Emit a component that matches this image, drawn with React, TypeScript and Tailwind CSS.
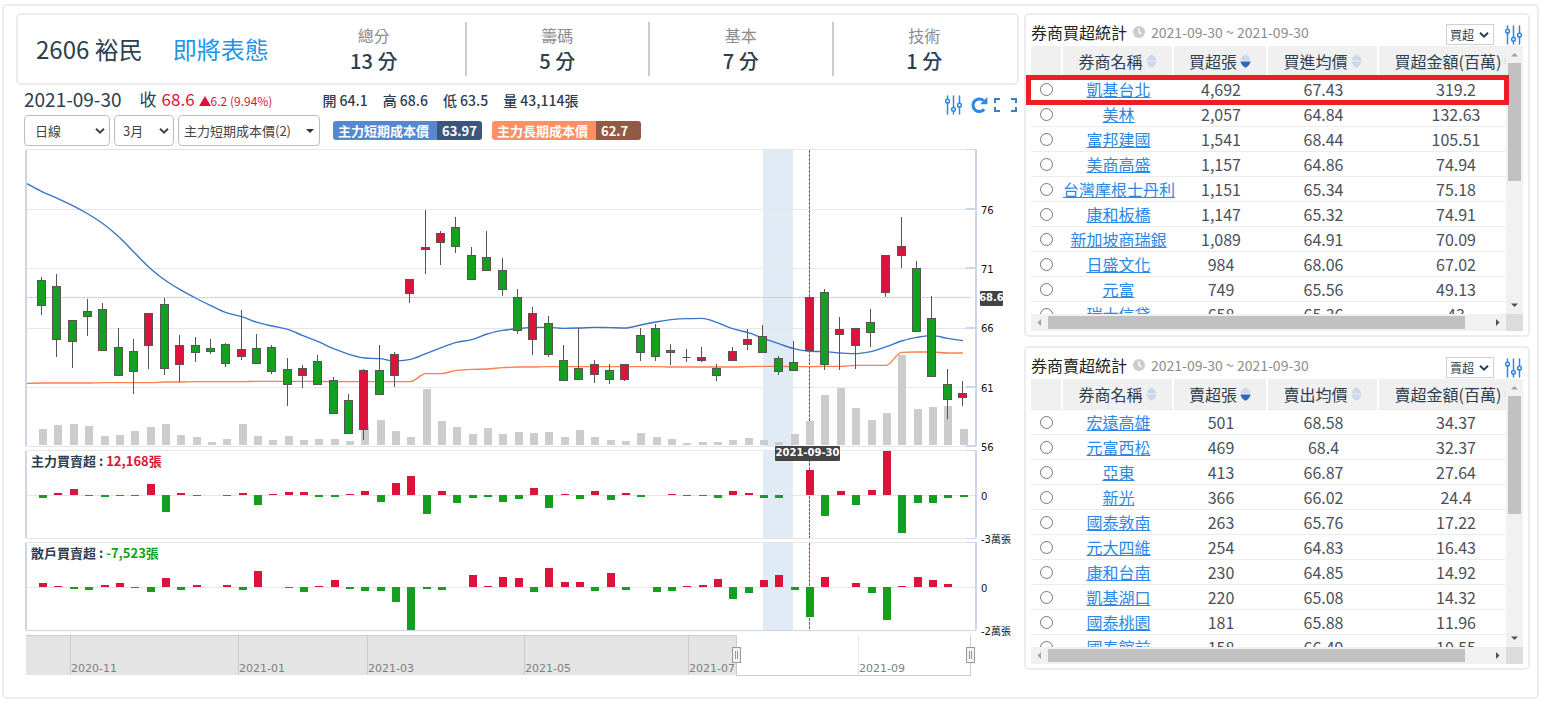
import React from "react";

type Candle = [high: number, top: number, bottom: number, low: number, up: 0 | 1];

/* Values below are in thirds of a pixel, measured from y = 145. */
const CANDLES: Candle[] = [
  [396, 406, 482, 510, 0], [387, 424, 584, 636, 0], [526, 526, 590, 669, 0], [462, 499, 515, 573, 0],
  [474, 493, 617, 617, 0], [549, 607, 692, 692, 0], [582, 619, 680, 747, 0], [505, 505, 602, 672, 1],
  [459, 478, 671, 690, 0], [570, 601, 659, 711, 1], [576, 601, 623, 651, 0], [582, 610, 620, 627, 0],
  [594, 598, 654, 666, 0], [495, 613, 635, 645, 1], [567, 610, 656, 656, 0], [600, 607, 680, 687, 0],
  [639, 674, 719, 783, 0], [660, 670, 692, 729, 1], [630, 649, 719, 719, 0], [696, 706, 806, 806, 0],
  [747, 766, 866, 866, 0], [672, 676, 854, 885, 1], [600, 676, 749, 749, 0], [621, 628, 692, 726, 1],
  [403, 403, 446, 474, 1], [195, 307, 314, 387, 1], [258, 265, 293, 360, 1], [216, 247, 305, 324, 0],
  [306, 331, 402, 402, 0], [258, 337, 377, 377, 0], [339, 376, 434, 453, 0], [432, 457, 557, 567, 0],
  [486, 505, 584, 630, 1], [513, 535, 629, 636, 0], [600, 646, 707, 707, 0], [550, 670, 704, 704, 0],
  [645, 658, 689, 714, 1], [657, 676, 704, 717, 0], [658, 658, 704, 708, 1], [549, 571, 623, 648, 0],
  [537, 550, 635, 648, 0], [597, 616, 623, 660, 0], [612, 637, 637, 651, 0], [606, 637, 647, 651, 1],
  [657, 670, 692, 708, 0], [606, 619, 647, 647, 1], [552, 583, 599, 615, 1], [540, 574, 623, 623, 0],
  [633, 640, 680, 690, 0], [588, 652, 677, 677, 0], [457, 457, 617, 617, 1], [432, 442, 659, 675, 0],
  [516, 553, 569, 675, 1], [550, 550, 602, 672, 1], [492, 532, 563, 606, 0], [331, 331, 443, 456, 1],
  [216, 304, 332, 369, 1], [348, 370, 560, 560, 0], [453, 520, 695, 695, 0], [672, 718, 764, 822, 0],
  [708, 745, 758, 783, 1],
];

const VOLUME = [
  48, 60, 63, 57, 27, 30, 42, 54, 63, 30, 24, 9, 18, 63, 27, 15, 27, 15, 18, 18, 12, 60, 75, 42, 24, 168, 72, 54, 33,
  51, 33, 39, 36, 39, 24, 45, 24, 15, 12, 36, 24, 18, 6, 9, 9, 15, 21, 15, 9, 33, 72, 150, 171, 111, 75, 96, 270, 108,
  114, 117, 48,
];

const MAIN_FORCE = [
  -9, 6, 18, -3, -6, -3, -3, 33, -51, 6, -3, 0, -3, 6, -30, 3, 9, 9, -6, -6, 3, 12, -21, 36, 57, -57, 12, -24, -9, -6,
  -21, -12, 21, -39, 3, -12, 12, -15, 6, -6, 0, 3, -3, -3, -9, 12, 6, -9, -9, 0, 75, -63, 12, -30, 15, 132, -114, -24,
  -24, -9, -6,
];

const RETAIL = [
  12, 3, -6, -9, 6, 12, -3, -15, 27, -9, 6, 0, 6, -9, 48, 0, -3, -15, 3, 21, -6, -12, -12, -45, -129, -6, -9, 0, 36, 3,
  30, 27, -15, 57, 15, 15, -12, 42, -9, 0, -15, -12, 3, 6, 24, -36, -18, 21, 36, -9, -90, 30, 0, 12, -18, -99, 3, 30,
  21, 9, 0,
];

const SHORT_COST = [
  140, 160, 182, 207, 237, 275, 322, 368, 405, 434, 459, 482, 503, 515, 532, 543, 553, 572, 590, 611, 628, 639, 641,
  648, 643, 626, 608, 592, 584, 567, 556, 551, 547, 547, 550, 549, 547, 548, 549, 540, 531, 524, 521, 520, 533, 551,
  563, 580, 596, 611, 619, 620, 624, 626, 620, 605, 588, 577, 572, 580, 587,
];

const LONG_COST = [
  714, 714, 714, 714, 713, 713, 713, 713, 711, 711, 710, 710, 710, 710, 709, 709, 709, 709, 709, 710, 710, 710, 710,
  710, 710, 686, 686, 676, 673, 672, 668, 666, 666, 665, 665, 665, 665, 665, 665, 665, 665, 666, 666, 666, 666, 666,
  665, 664, 664, 665, 665, 664, 664, 661, 661, 661, 622, 621, 621, 624, 624,
];

const RED = "#dc143c";
const GREEN = "#14a01e";
const AXIS = "#ccd6eb";
const GRID = "#e6e6e6";
const CROSSHAIR = "#1c7a99";

const py = (v: number) => 145 + v / 3;
const cx = (i: number) => Math.round(41.5 + i * 15.35 - 0.5) + 0.5;
const bx = (i: number) => Math.round(39.15 + i * 15.34);

/* Monotone cubic curve, so flat stretches stay flat beside steep ones. */
function curve(pts: [number, number][]) {
  const n = pts.length;
  const slope: number[] = [];
  for (let i = 0; i < n - 1; i++) slope.push((pts[i + 1][1] - pts[i][1]) / (pts[i + 1][0] - pts[i][0]));
  const tan = pts.map((_, i) => {
    if (i === 0) return slope[0];
    if (i === n - 1) return slope[n - 2];
    const a = slope[i - 1];
    const b = slope[i];
    return a * b <= 0 ? 0 : (2 * a * b) / (a + b);
  });
  let d = `M${pts[0][0]} ${pts[0][1].toFixed(2)}`;
  for (let i = 0; i < n - 1; i++) {
    const h = (pts[i + 1][0] - pts[i][0]) / 3;
    d += `C${(pts[i][0] + h).toFixed(2)} ${(pts[i][1] + tan[i] * h).toFixed(2)} ${(pts[i + 1][0] - h).toFixed(2)} ${(
      pts[i + 1][1] - tan[i + 1] * h
    ).toFixed(2)} ${pts[i + 1][0].toFixed(2)} ${pts[i + 1][1].toFixed(2)}`;
  }
  return d;
}

const linePath = (start: number, values: number[]) =>
  curve([[27, py(start)], ...values.map((v, i): [number, number] => [42 + i * 15.35, py(v)])]);

function Bars({ values, base }: { values: number[]; base: number }) {
  return (
    <g shapeRendering="crispEdges">
      {values.map((v, i) => {
        const h = Math.round(Math.abs(v) / 3);
        return h === 0 ? null : (
          <rect key={i} x={bx(i)} width={8} y={v > 0 ? base - h : base} height={h} fill={v > 0 ? RED : GREEN} />
        );
      })}
    </g>
  );
}

const MONTHS: [number, string][] = [
  [70, "2020-11"],
  [238, "2021-01"],
  [367, "2021-03"],
  [524, "2021-05"],
  [688, "2021-07"],
  [858, "2021-09"],
];

function Handle({ x }: { x: number }) {
  return (
    <g>
      <rect x={x - 4} y={647.5} width={8} height={15} fill="#f2f2f2" stroke="#999999" />
      <path d={`M${x - 1} 651v8M${x + 1} 651v8`} stroke="#999999" />
    </g>
  );
}

function Chart() {
  const panels = [
    [149, 446],
    [450, 538],
    [542, 630],
  ];
  return (
    <svg viewBox="16 148 1003 532" className="mt-0.5 block h-auto w-full" role="img" aria-label="2606 裕民 日線">
      <g shapeRendering="crispEdges">
        {panels.map(([t, b]) => (
          <rect key={t} x={763} y={t} width={30} height={b - t} fill="#e0ebf5" />
        ))}
        {[149, 209, 268, 328, 387, 446, 450, 495, 538, 542, 587].map((y) => (
          <rect key={y} x={26} y={y} width={950} height={1} fill={GRID} />
        ))}
        <rect x={26} y={630} width={950} height={1} fill={AXIS} />
        {VOLUME.map((v, i) => (
          <rect key={i} x={bx(i)} width={8} y={445 - Math.round(v / 3)} height={Math.round(v / 3)} fill="#cccccc" />
        ))}
        <path d="M26 297.5H971" stroke="#c8c8c8" strokeDasharray="3 1" />
      </g>
      <path d="M809.5 150V421" stroke={CROSSHAIR} strokeDasharray="3 1" />
      <path d={linePath(116, SHORT_COST)} fill="none" stroke="#3a74c8" strokeWidth={1.4} />
      <path d={linePath(715, LONG_COST)} fill="none" stroke="#fc7f4e" strokeWidth={1.4} />
      {CANDLES.map(([h, t, b, l, up], i) => {
        const x = cx(i);
        const top = Math.round(py(t) - 0.5) + 0.5;
        const bottom = Math.round(py(b) - 0.5) + 0.5;
        return (
          <g key={i} stroke="#555555">
            <path d={`M${x} ${Math.round(py(h))}V${Math.round(py(l))}`} />
            {bottom > top ? (
              <rect x={x - 4} y={top} width={8} height={bottom - top} fill={up ? RED : GREEN} />
            ) : (
              <path d={`M${x - 4} ${top}h8`} />
            )}
          </g>
        );
      })}
      <Bars values={MAIN_FORCE} base={495} />
      <Bars values={RETAIL} base={587} />
      <path d="M809.5 451V470M809.5 496V538M809.5 543V587M809.5 618V630" stroke={CROSSHAIR} strokeDasharray="3 1" />

      <g shapeRendering="crispEdges" fill={AXIS}>
        {panels.map(([t, b]) => (
          <g key={t}>
            <rect x={25} y={t + 1} width={2} height={b - t - 1} />
            <rect x={975} y={t} width={2} height={b - t} />
            <rect x={966} y={t} width={10} height={1} />
          </g>
        ))}
        {[208, 267, 327, 386, 445].map((y) => (
          <rect key={y} x={966} y={y} width={10} height={2} />
        ))}
        <rect x={966} y={538} width={10} height={1} />
      </g>

      <g className="font-['DejaVu_Sans','Noto_Sans_CJK_TC',sans-serif] text-[10px]" fill="#111111">
        <text x={981} y={214}>76</text>
        <text x={981} y={273}>71</text>
        <text x={981} y={332}>66</text>
        <text x={981} y={392}>61</text>
        <text x={981} y={451}>56</text>
        <text x={981} y={500}>0</text>
        <text x={981} y={543}>-3萬張</text>
        <text x={981} y={592}>0</text>
        <text x={981} y={635}>-2萬張</text>
      </g>
      <g className="font-['DejaVu_Sans',sans-serif] text-[10px] font-bold">
        <rect x={980} y={291} width={23} height={15} rx={1} fill="#444444" />
        <text x={991.5} y={301} textAnchor="middle" fill="#ffffff">68.6</text>
        <rect x={775} y={446} width={65} height={15} rx={1} fill="#444444" />
        <text x={807.5} y={456} textAnchor="middle" fill="#ffffff">2021-09-30</text>
      </g>

      <g className="font-['Noto_Sans_CJK_TC',sans-serif] text-[13px] font-bold" fill="#2c3e50">
        <text x={31} y={466}>
          主力買賣超 : <tspan fill={RED}>12,168張</tspan>
        </text>
        <text x={31} y={558}>
          散戶買賣超 : <tspan fill={GREEN}>-7,523張</tspan>
        </text>
      </g>

      <rect x={26} y={635} width={710} height={40} fill="#e4e4e4" />
      <g className="font-['DejaVu_Sans',sans-serif] text-[11px]">
        {MONTHS.map(([x, label]) => (
          <g key={label}>
            <path d={`M${x + 0.5} 636V675`} stroke={x > 736 ? "#e6e6e6" : "#cccccc"} />
            <text x={x + 1} y={672} fill="#808080">{label}</text>
          </g>
        ))}
      </g>
      <path d="M26 635.5H736.5V675.5H970.5V635" fill="none" stroke="#cccccc" />
      <Handle x={736.5} />
      <Handle x={970.5} />
    </svg>
  );
}

function Sliders() {
  return (
    <svg viewBox="0 0 17 20" width="17" height="20" fill="none" stroke="#2b88e6" strokeWidth="1.5" strokeLinecap="round">
      <path d="M2.5 1v3.2M2.5 8.2V19M8.5 1v11.2M8.5 16.4V19M14.5 1v7.2M14.5 12.2V19" />
      <circle cx="2.5" cy="6.2" r="1.9" />
      <circle cx="8.5" cy="14.3" r="1.9" />
      <circle cx="14.5" cy="10.2" r="1.9" />
    </svg>
  );
}

function Chevron() {
  return (
    <svg
      viewBox="0 0 10 7"
      width="10"
      height="7"
      fill="none"
      stroke="currentColor"
      strokeWidth="2"
      className="pointer-events-none absolute top-1/2 right-1 -translate-y-1/2"
    >
      <path d="M1 1.2l4 4 4-4" />
    </svg>
  );
}

function Select({ label, options, className }: { label: string; options: string[]; className: string }) {
  return (
    <span className={`relative inline-flex ${className}`}>
      <select aria-label={label} className="w-full appearance-none bg-transparent outline-none">
        {options.map((o) => (
          <option key={o}>{o}</option>
        ))}
      </select>
      <Chevron />
    </span>
  );
}

function Score({ name, value, last }: { name: string; value: string; last?: boolean }) {
  return (
    <div
      className={`flex h-[54px] flex-1 flex-col items-center justify-center border-r-2 ${
        last ? "border-transparent" : "border-[#cccccc]"
      }`}
    >
      <span className="text-base leading-6 text-[#8c8c8c]">{name}</span>
      <span className="text-xl leading-7 font-medium">{value}</span>
    </div>
  );
}

function CostBadge({ name, value, left, right }: { name: string; value: string; left: string; right: string }) {
  return (
    <span className="flex h-[19px] overflow-hidden rounded-[3px] text-[13px] leading-[19px] font-bold text-white">
      <span className={`w-[104px] pl-[5px] ${left}`}>{name}</span>
      <span className={`w-[45px] pl-[5px] ${right}`}>{value}</span>
    </span>
  );
}

function StockPanel() {
  return (
    <section className="min-w-0 flex-1">
      <header className="flex h-[72px] items-center rounded-[5px] border-2 border-[#ececec]">
        <h1 className="flex w-[265px] shrink-0 gap-[30px] pl-[18px] text-2xl leading-8">
          <span>2606 裕民</span>
          <span className="text-[#2196e8]">即將表態</span>
        </h1>
        <Score name="總分" value="13 分" />
        <Score name="籌碼" value="5 分" />
        <Score name="基本" value="7 分" />
        <Score name="技術" value="1 分" last />
      </header>

      <div className="flex h-[30px] items-center pl-2">
        <span className="pb-0.5 text-[19px]">2021-09-30</span>
        <span className="ml-[18px] flex items-baseline pb-0.5 text-[17px]">
          <span className="mr-[5px]">收</span>
          <span className="text-[#dc143c]">68.6</span>
          <svg viewBox="0 0 12 10" width="12" height="10" className="ml-1" aria-hidden>
            <path d="M6 0L12 10H0z" fill={RED} />
          </svg>
          <span className="text-xs text-[#dc143c]">6.2 (9.94%)</span>
        </span>
        <span className="ml-[50px] flex gap-[15px] text-sm font-medium">
          <span>開 64.1</span>
          <span>高 68.6</span>
          <span>低 63.5</span>
          <span>量 43,114張</span>
        </span>
        <span className="ml-auto flex items-center pt-[9px] pr-px">
          <button type="button" aria-label="設定">
            <Sliders />
          </button>
          <button type="button" aria-label="重新整理" className="ml-2">
            <svg viewBox="0 0 18 18" width="18" height="18">
              <path d="M14.2 13.2A6.3 6.3 0 1 1 13.6 4.6" fill="none" stroke="#2b88e6" strokeWidth="3" />
              <path d="M17.4 1v7.2H10z" fill="#2b88e6" />
            </svg>
          </button>
          <button type="button" aria-label="全螢幕" className="ml-1.5">
            <svg viewBox="0 0 24 16" width="24" height="16" fill="none" stroke="#3d7fc4" strokeWidth="2">
              <path d="M6 2H1v4M1 10v4h5M17 2h5v4M22 10v4h-5" />
            </svg>
          </button>
        </span>
      </div>

      <div className="flex h-[31px] pl-2 text-[13px] text-[#444444]">
        <Select
          label="週期"
          options={["日線", "週線"]}
          className="w-[86px] rounded-[4px] border border-[#bdbdbd] pl-2.5"
        />
        <Select
          label="區間"
          options={["3月", "6月"]}
          className="ml-1 w-[60px] rounded-[4px] border border-[#bdbdbd] pl-2"
        />
        <button
          type="button"
          className="ml-1 flex w-[142px] items-center justify-between rounded-[4px] border border-[#bdbdbd] px-[5px]"
        >
          主力短期成本價(2)
          <svg viewBox="0 0 8 4" width="8" height="4" aria-hidden>
            <path d="M0 0h8L4 4z" fill="#333333" />
          </svg>
        </button>
        <span className="ml-[13px] flex items-center gap-2.5">
          <CostBadge name="主力短期成本價" value="63.97" left="bg-[#5687d1]" right="bg-[#3e567b]" />
          <CostBadge name="主力長期成本價" value="62.7" left="bg-[#fe9065]" right="bg-[#905a44]" />
        </span>
      </div>

      <Chart />
    </section>
  );
}

function SortMark({ active }: { active?: boolean }) {
  return (
    <svg viewBox="0 0 11 14" width="11" height="14" className="ml-[3px] shrink-0" aria-hidden>
      <path d="M5.5 0.3C8 1.6 10 3.8 10.6 6.6H0.4C1 3.8 3 1.6 5.5 0.3z" fill="#ccd8ea" />
      <path d="M5.5 13.7C8 12.4 10 10.2 10.6 7.4H0.4C1 10.2 3 12.4 5.5 13.7z" fill={active ? "#2f66bd" : "#ccd8ea"} />
    </svg>
  );
}

type Row = [string, string, string, string];

interface TableProps {
  title: string;
  option: string;
  heads: string[];
  rows: Row[];
  highlight?: boolean;
}

function BrokerTable({ title, option, heads, rows, highlight }: TableProps) {
  return (
    <section className="relative rounded-[5px] border-2 border-[#ececec] px-[5px] pb-1">
      <div className="flex h-[31px] items-center pt-2">
        <div className="flex items-center pb-[5px]">
          <h2 className="text-base leading-6 text-[#222222]">{title}</h2>
          <svg viewBox="0 0 12 12" width="12" height="12" className="mx-[6px]" aria-hidden>
            <circle cx="6" cy="6" r="6" fill="#cccccc" />
            <path d="M6 2.5V6.2l2.4 1.6" fill="none" stroke="#ffffff" strokeWidth="1.4" />
          </svg>
          <span className="text-sm leading-6 text-[#8c8c8c]">2021-09-30 ~ 2021-09-30</span>
        </div>
        <Select
          label={title}
          options={[option]}
          className="ml-auto h-[21px] w-[48px] border border-[#ccd0da] pl-[3px] text-xs"
        />
        <button type="button" aria-label="設定" className="mr-px ml-[11px]">
          <Sliders />
        </button>
      </div>

      <div className="grid grid-cols-[minmax(0,1fr)_17px] grid-rows-[268px_17px]">
        <div className="overflow-hidden">
          <table className="w-[502px] min-w-full table-fixed border-separate border-spacing-0 text-center">
            <colgroup>
              <col className="w-8" />
              <col className="w-[111px]" />
              <col className="w-[94px]" />
              <col className="w-[111px]" />
              <col />
            </colgroup>
            <thead>
              <tr className="h-[31px]">
                <th className="border-r-2 border-b border-r-white border-b-[#ececec] bg-[#f0f0f0] p-0" />
                {heads.map((h, i) => (
                  <th
                    key={h}
                    scope="col"
                    className="border-r-2 border-b border-r-white border-b-[#ececec] bg-[#f0f0f0] p-0 font-normal"
                  >
                    <span className="flex items-center justify-center whitespace-nowrap">
                      {h}
                      <SortMark active={i === 1} />
                    </span>
                  </th>
                ))}
              </tr>
            </thead>
            <tbody className="text-[#4b5058]">
              {rows.map(([name, ...nums]) => (
                <tr key={name} className="h-[25px]">
                  <td className="border-b border-[#ececec] p-0 pr-0.5">
                    <input type="radio" name={title} aria-label={name} className="mx-auto block size-[13px]" />
                  </td>
                  <td className="border-b border-[#ececec] p-0 leading-6 whitespace-nowrap">
                    <a href="#" className="text-[#2b88e6] underline">
                      {name}
                    </a>
                  </td>
                  {nums.map((n, i) => (
                    <td key={i} className="border-b border-[#ececec] p-0 leading-6">
                      {n}
                    </td>
                  ))}
                </tr>
              ))}
            </tbody>
          </table>
        </div>

        <div className="flex flex-col items-center bg-[#f1f1f1]" aria-hidden>
          <svg viewBox="0 0 17 17" width="17" height="17">
            <path d="M5 10.5h7L8.5 7z" fill="#a3a3a3" />
          </svg>
          <span className="h-[118px] w-[13px] bg-[#c1c1c1]" />
          <svg viewBox="0 0 17 17" width="17" height="17" className="mt-auto">
            <path d="M5 6.5h7L8.5 10z" fill="#505050" />
          </svg>
        </div>
        <div className="flex items-center bg-[#f1f1f1]" aria-hidden>
          <svg viewBox="0 0 17 17" width="17" height="17">
            <path d="M10 5v7L6.5 8.5z" fill="#a3a3a3" />
          </svg>
          <span className="h-[13px] w-[417px] bg-[#c1c1c1]" />
          <svg viewBox="0 0 17 17" width="17" height="17" className="ml-auto">
            <path d="M7 5v7l3.5-3.5z" fill="#505050" />
          </svg>
        </div>
        <div className="bg-[#dcdcdc]" aria-hidden />
      </div>

      {highlight && (
        <div className="pointer-events-none absolute top-[60px] right-[19px] left-0 h-[30px] border-[5px] border-[#ee1c25]" />
      )}
    </section>
  );
}

const BUY_ROWS: Row[] = [
  ["凱基台北", "4,692", "67.43", "319.2"],
  ["美林", "2,057", "64.84", "132.63"],
  ["富邦建國", "1,541", "68.44", "105.51"],
  ["美商高盛", "1,157", "64.86", "74.94"],
  ["台灣摩根士丹利", "1,151", "65.34", "75.18"],
  ["康和板橋", "1,147", "65.32", "74.91"],
  ["新加坡商瑞銀", "1,089", "64.91", "70.09"],
  ["日盛文化", "984", "68.06", "67.02"],
  ["元富", "749", "65.56", "49.13"],
  ["瑞士信貸", "658", "65.36", "43"],
];

const SELL_ROWS: Row[] = [
  ["宏遠高雄", "501", "68.58", "34.37"],
  ["元富西松", "469", "68.4", "32.37"],
  ["亞東", "413", "66.87", "27.64"],
  ["新光", "366", "66.02", "24.4"],
  ["國泰敦南", "263", "65.76", "17.22"],
  ["元大四維", "254", "64.83", "16.43"],
  ["康和台南", "230", "64.85", "14.92"],
  ["凱基湖口", "220", "65.08", "14.32"],
  ["國泰桃園", "181", "65.88", "11.96"],
  ["國泰館前", "158", "66.49", "10.55"],
];

export default function App() {
  return (
    <div className="bg-white pt-1 pr-[5px] pb-2 pl-0.5 font-['Noto_Sans_CJK_TC',sans-serif] text-base text-[#2c3e50]">
      <main className="flex items-start gap-[5px] rounded-[5px] border-2 border-[#ececec] pt-[7px] pr-[7px] pb-[17px] pl-3">
        <StockPanel />
        <aside className="flex w-[506px] shrink-0 flex-col gap-[9px]">
          <BrokerTable
            title="券商買超統計"
            option="買超"
            heads={["券商名稱", "買超張", "買進均價", "買超金額(百萬)"]}
            rows={BUY_ROWS}
            highlight
          />
          <BrokerTable
            title="券商賣超統計"
            option="賣超"
            heads={["券商名稱", "賣超張", "賣出均價", "賣超金額(百萬)"]}
            rows={SELL_ROWS}
          />
        </aside>
      </main>
    </div>
  );
}
